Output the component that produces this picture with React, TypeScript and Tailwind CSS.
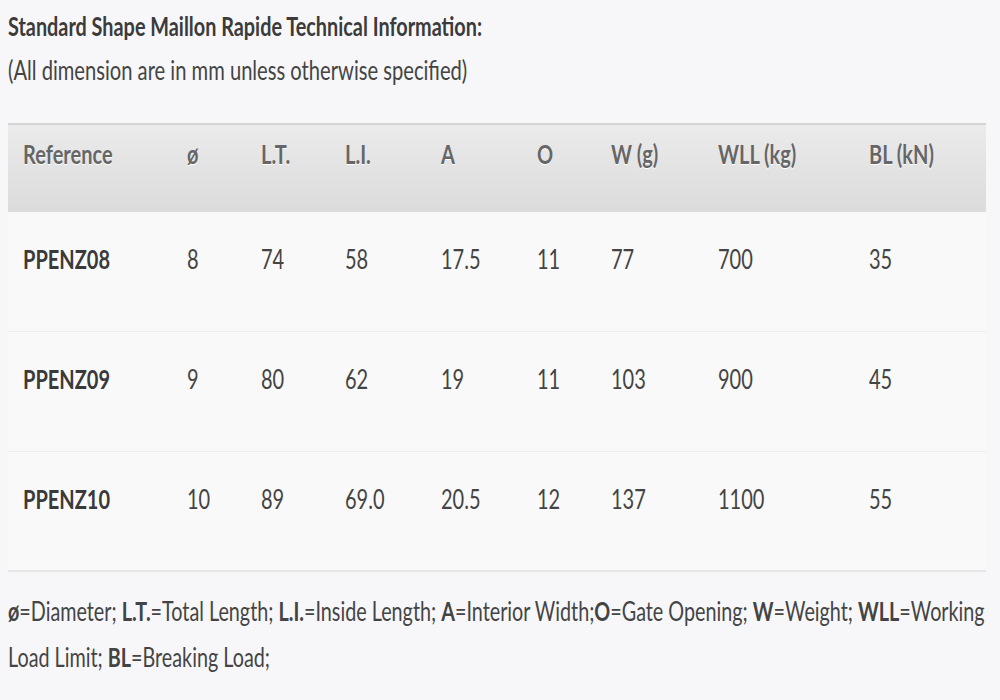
import React from "react";

type Row = {
    ref: string;
    values: string[];
};

const headers = ["Reference", "ø", "L.T.", "L.I.", "A", "O", "W (g)", "WLL (kg)", "BL (kN)"];

const rows: Row[] = [
    {ref: "PPENZ08", values: ["8", "74", "58", "17.5", "11", "77", "700", "35"]},
    {ref: "PPENZ09", values: ["9", "80", "62", "19", "11", "103", "900", "45"]},
    {ref: "PPENZ10", values: ["10", "89", "69.0", "20.5", "12", "137", "1100", "55"]},
];

const cols = "grid grid-cols-[164px_74px_84px_96px_96px_74px_107px_151px_132px]";
// the source text is narrow, so squeeze each run of text horizontally
const narrow = "inline-block origin-left scale-x-[0.77] whitespace-nowrap";

export default function App() {
    return (
        <div
            className="min-h-[700px] w-[1000px] overflow-hidden bg-[#f7f7fa] px-2 pt-[4px] text-[26px] leading-[44px] text-[#3a3a3a]"
            style={{fontFamily: 'Lato, "Noto Sans", sans-serif'}}
        >
            <h1 className="font-bold text-[#3b3b3b]">
                <span className="inline-block origin-left scale-x-[0.763] whitespace-nowrap">Standard Shape Maillon Rapide Technical Information:</span>
            </h1>
            <p className="text-[#444]">
                <span className="inline-block origin-left scale-x-[0.775] whitespace-nowrap">(All dimension are in mm unless otherwise specified)</span>
            </p>

            <div className="mt-[31px] w-[978px]">
                <div
                    className={`${cols} h-[89px] border-t-2 border-[#d4d4d4] bg-gradient-to-b from-[#ebebeb] to-[#dbdbdb] font-bold text-[#666] [text-shadow:0_1px_0_#fff]`}
                >
                    {headers.map((h) => (
                        <div key={h} className="pl-[15px] pt-[6px] leading-[46px]">
                            <span className={narrow}>{h}</span>
                        </div>
                    ))}
                </div>

                {rows.map((row, i) => (
                    <div
                        key={row.ref}
                        className={`${cols} h-[120px] bg-[#f9f9f9] ${i === rows.length - 1 ? "border-b-2 border-[#e6e6e6]" : "border-b border-[#ececec]"}`}
                    >
                        <div className="pl-[15px] pt-[24px] leading-[46px] font-bold text-[#3a3a3a]">
                            <span className={narrow}>{row.ref}</span>
                        </div>
                        {row.values.map((v, j) => (
                            <div key={j} className="pl-[15px] pt-[24px] leading-[46px] text-[#444]">
                                <span className={narrow}>{v}</span>
                            </div>
                        ))}
                    </div>
                ))}
            </div>

            <div className="mt-[16px] leading-[46px] text-[#444]">
                <div>
                    <span className="inline-block origin-left scale-x-[0.76] whitespace-nowrap">
                        <b>ø</b>=Diameter; <b>L.T.</b>=Total Length; <b>L.I.</b>=Inside Length; <b>A</b>=Interior Width;<b>O</b>=Gate Opening; <b>W</b>=Weight; <b>WLL</b>=Working
                    </span>
                </div>
                <div>
                    <span className="inline-block origin-left scale-x-[0.76] whitespace-nowrap">
                        Load Limit; <b>BL</b>=Breaking Load;
                    </span>
                </div>
            </div>
        </div>
    );
}
